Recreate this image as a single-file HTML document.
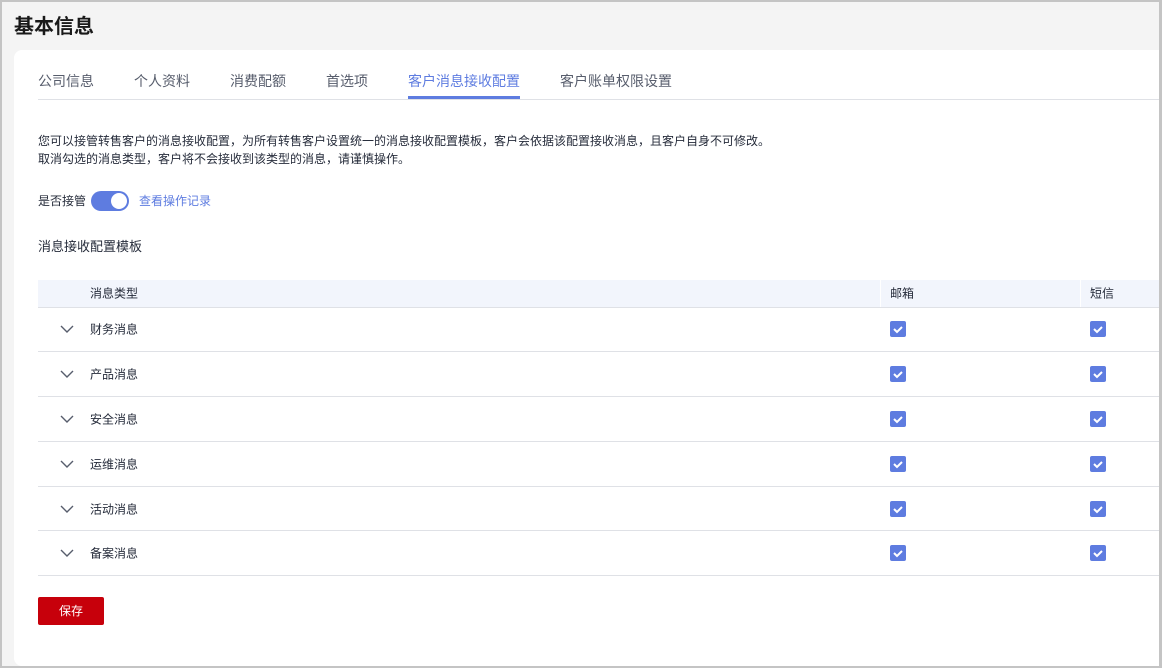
<!DOCTYPE html>
<html><head><meta charset="utf-8"><style>
*{margin:0;padding:0;box-sizing:border-box}
body{width:1162px;height:668px;overflow:hidden;background:#f4f4f4;font-family:"Liberation Sans","Noto Sans CJK SC",sans-serif;color:#252b3a;position:relative}
.frame{position:absolute;left:0;top:0;width:1162px;height:668px;border:2px solid #c4c4c4;border-right-width:3px;z-index:5;pointer-events:none}
h1{position:absolute;left:14px;top:10px;font-size:20px;font-weight:bold;color:#191919}
.card{position:absolute;left:14px;top:50px;width:1146px;height:616px;background:#fff;border-radius:8px 0 0 8px}
.tabs{position:absolute;left:24px;top:0;right:0;height:50px;border-bottom:1px solid #dfe1e6}
.tab{position:absolute;top:21px;font-size:14px;color:#575d6c}
.tab.on{color:#5e7ce0}
.ul{position:absolute;left:370px;top:46px;width:112px;height:3px;background:#5e7ce0}
.p{position:absolute;left:24px;font-size:12px;color:#252b3a;line-height:18px}
.tog{position:absolute;left:77px;top:141px;width:38px;height:20px;border-radius:10px;background:#5e7ce0}
.tog i{position:absolute;right:2px;top:2px;width:16px;height:16px;border-radius:50%;background:#fff}
.table{position:absolute;left:24px;top:230px;width:1122px}
.hd{height:27.5px;background:#f2f5fc;border-bottom:1px solid #dfe1e6;position:relative;font-size:12px;color:#252b3a}
.row{height:44.8px;border-bottom:1px solid #dfe1e6;position:relative;font-size:12px}
.c1{position:absolute;left:52px;top:50%;transform:translateY(-50%)}
.c2{position:absolute;left:852px;top:50%;transform:translateY(-50%)}
.c3{position:absolute;left:1052px;top:50%;transform:translateY(-50%)}
.sep{position:absolute;top:0;height:27px;width:1px;background:#fff}
.cb{display:block;width:16px;height:16px}
.ch{position:absolute;left:22px;top:50%;transform:translateY(-50%)}
.btn{position:absolute;left:24px;top:547px;width:66px;height:28px;background:#c7000b;border-radius:2px;color:#fff;font-size:12px;text-align:center;line-height:28px}
</style></head><body>
<div class="frame"></div>
<h1>基本信息</h1>
<div class="card">
<div class="tabs">
<span class="tab" style="left:0">公司信息</span>
<span class="tab" style="left:96px">个人资料</span>
<span class="tab" style="left:192px">消费配额</span>
<span class="tab" style="left:288px">首选项</span>
<span class="tab on" style="left:370px">客户消息接收配置</span>
<span class="tab" style="left:522px">客户账单权限设置</span>
<div class="ul"></div>
</div>
<div class="p" style="top:82px">您可以接管转售客户的消息接收配置，为所有转售客户设置统一的消息接收配置模板，客户会依据该配置接收消息，且客户自身不可修改。<br>取消勾选的消息类型，客户将不会接收到该类型的消息，请谨慎操作。</div>
<div class="p" style="top:141px;line-height:20px">是否接管</div>
<div class="tog"><i></i></div>
<div class="p" style="top:141px;left:125px;line-height:20px;color:#5e7ce0">查看操作记录</div>
<div class="p" style="top:188px;font-size:13px">消息接收配置模板</div>
<div class="table">
<div class="hd"><span class="c1">消息类型</span><span class="sep" style="left:842px"></span><span class="c2">邮箱</span><span class="sep" style="left:1042px"></span><span class="c3">短信</span></div>
<div class="row"><svg class="ch" width="14" height="8" viewBox="0 0 14 8"><path d="M1 1l6 6 6-6" fill="none" stroke="#575d6c" stroke-width="1.4"/></svg><span class="c1">财务消息</span><span class="c2"><svg class="cb" viewBox="0 0 16 16"><rect width="16" height="16" rx="2" fill="#5e7ce0"/><path d="M4 8l3 3 5-5" fill="none" stroke="#fff" stroke-width="2"/></svg></span><span class="c3"><svg class="cb" viewBox="0 0 16 16"><rect width="16" height="16" rx="2" fill="#5e7ce0"/><path d="M4 8l3 3 5-5" fill="none" stroke="#fff" stroke-width="2"/></svg></span></div>
<div class="row"><svg class="ch" width="14" height="8" viewBox="0 0 14 8"><path d="M1 1l6 6 6-6" fill="none" stroke="#575d6c" stroke-width="1.4"/></svg><span class="c1">产品消息</span><span class="c2"><svg class="cb" viewBox="0 0 16 16"><rect width="16" height="16" rx="2" fill="#5e7ce0"/><path d="M4 8l3 3 5-5" fill="none" stroke="#fff" stroke-width="2"/></svg></span><span class="c3"><svg class="cb" viewBox="0 0 16 16"><rect width="16" height="16" rx="2" fill="#5e7ce0"/><path d="M4 8l3 3 5-5" fill="none" stroke="#fff" stroke-width="2"/></svg></span></div>
<div class="row"><svg class="ch" width="14" height="8" viewBox="0 0 14 8"><path d="M1 1l6 6 6-6" fill="none" stroke="#575d6c" stroke-width="1.4"/></svg><span class="c1">安全消息</span><span class="c2"><svg class="cb" viewBox="0 0 16 16"><rect width="16" height="16" rx="2" fill="#5e7ce0"/><path d="M4 8l3 3 5-5" fill="none" stroke="#fff" stroke-width="2"/></svg></span><span class="c3"><svg class="cb" viewBox="0 0 16 16"><rect width="16" height="16" rx="2" fill="#5e7ce0"/><path d="M4 8l3 3 5-5" fill="none" stroke="#fff" stroke-width="2"/></svg></span></div>
<div class="row"><svg class="ch" width="14" height="8" viewBox="0 0 14 8"><path d="M1 1l6 6 6-6" fill="none" stroke="#575d6c" stroke-width="1.4"/></svg><span class="c1">运维消息</span><span class="c2"><svg class="cb" viewBox="0 0 16 16"><rect width="16" height="16" rx="2" fill="#5e7ce0"/><path d="M4 8l3 3 5-5" fill="none" stroke="#fff" stroke-width="2"/></svg></span><span class="c3"><svg class="cb" viewBox="0 0 16 16"><rect width="16" height="16" rx="2" fill="#5e7ce0"/><path d="M4 8l3 3 5-5" fill="none" stroke="#fff" stroke-width="2"/></svg></span></div>
<div class="row"><svg class="ch" width="14" height="8" viewBox="0 0 14 8"><path d="M1 1l6 6 6-6" fill="none" stroke="#575d6c" stroke-width="1.4"/></svg><span class="c1">活动消息</span><span class="c2"><svg class="cb" viewBox="0 0 16 16"><rect width="16" height="16" rx="2" fill="#5e7ce0"/><path d="M4 8l3 3 5-5" fill="none" stroke="#fff" stroke-width="2"/></svg></span><span class="c3"><svg class="cb" viewBox="0 0 16 16"><rect width="16" height="16" rx="2" fill="#5e7ce0"/><path d="M4 8l3 3 5-5" fill="none" stroke="#fff" stroke-width="2"/></svg></span></div>
<div class="row"><svg class="ch" width="14" height="8" viewBox="0 0 14 8"><path d="M1 1l6 6 6-6" fill="none" stroke="#575d6c" stroke-width="1.4"/></svg><span class="c1">备案消息</span><span class="c2"><svg class="cb" viewBox="0 0 16 16"><rect width="16" height="16" rx="2" fill="#5e7ce0"/><path d="M4 8l3 3 5-5" fill="none" stroke="#fff" stroke-width="2"/></svg></span><span class="c3"><svg class="cb" viewBox="0 0 16 16"><rect width="16" height="16" rx="2" fill="#5e7ce0"/><path d="M4 8l3 3 5-5" fill="none" stroke="#fff" stroke-width="2"/></svg></span></div>
</div>
<div class="btn">保存</div>
</div>
</body></html>
